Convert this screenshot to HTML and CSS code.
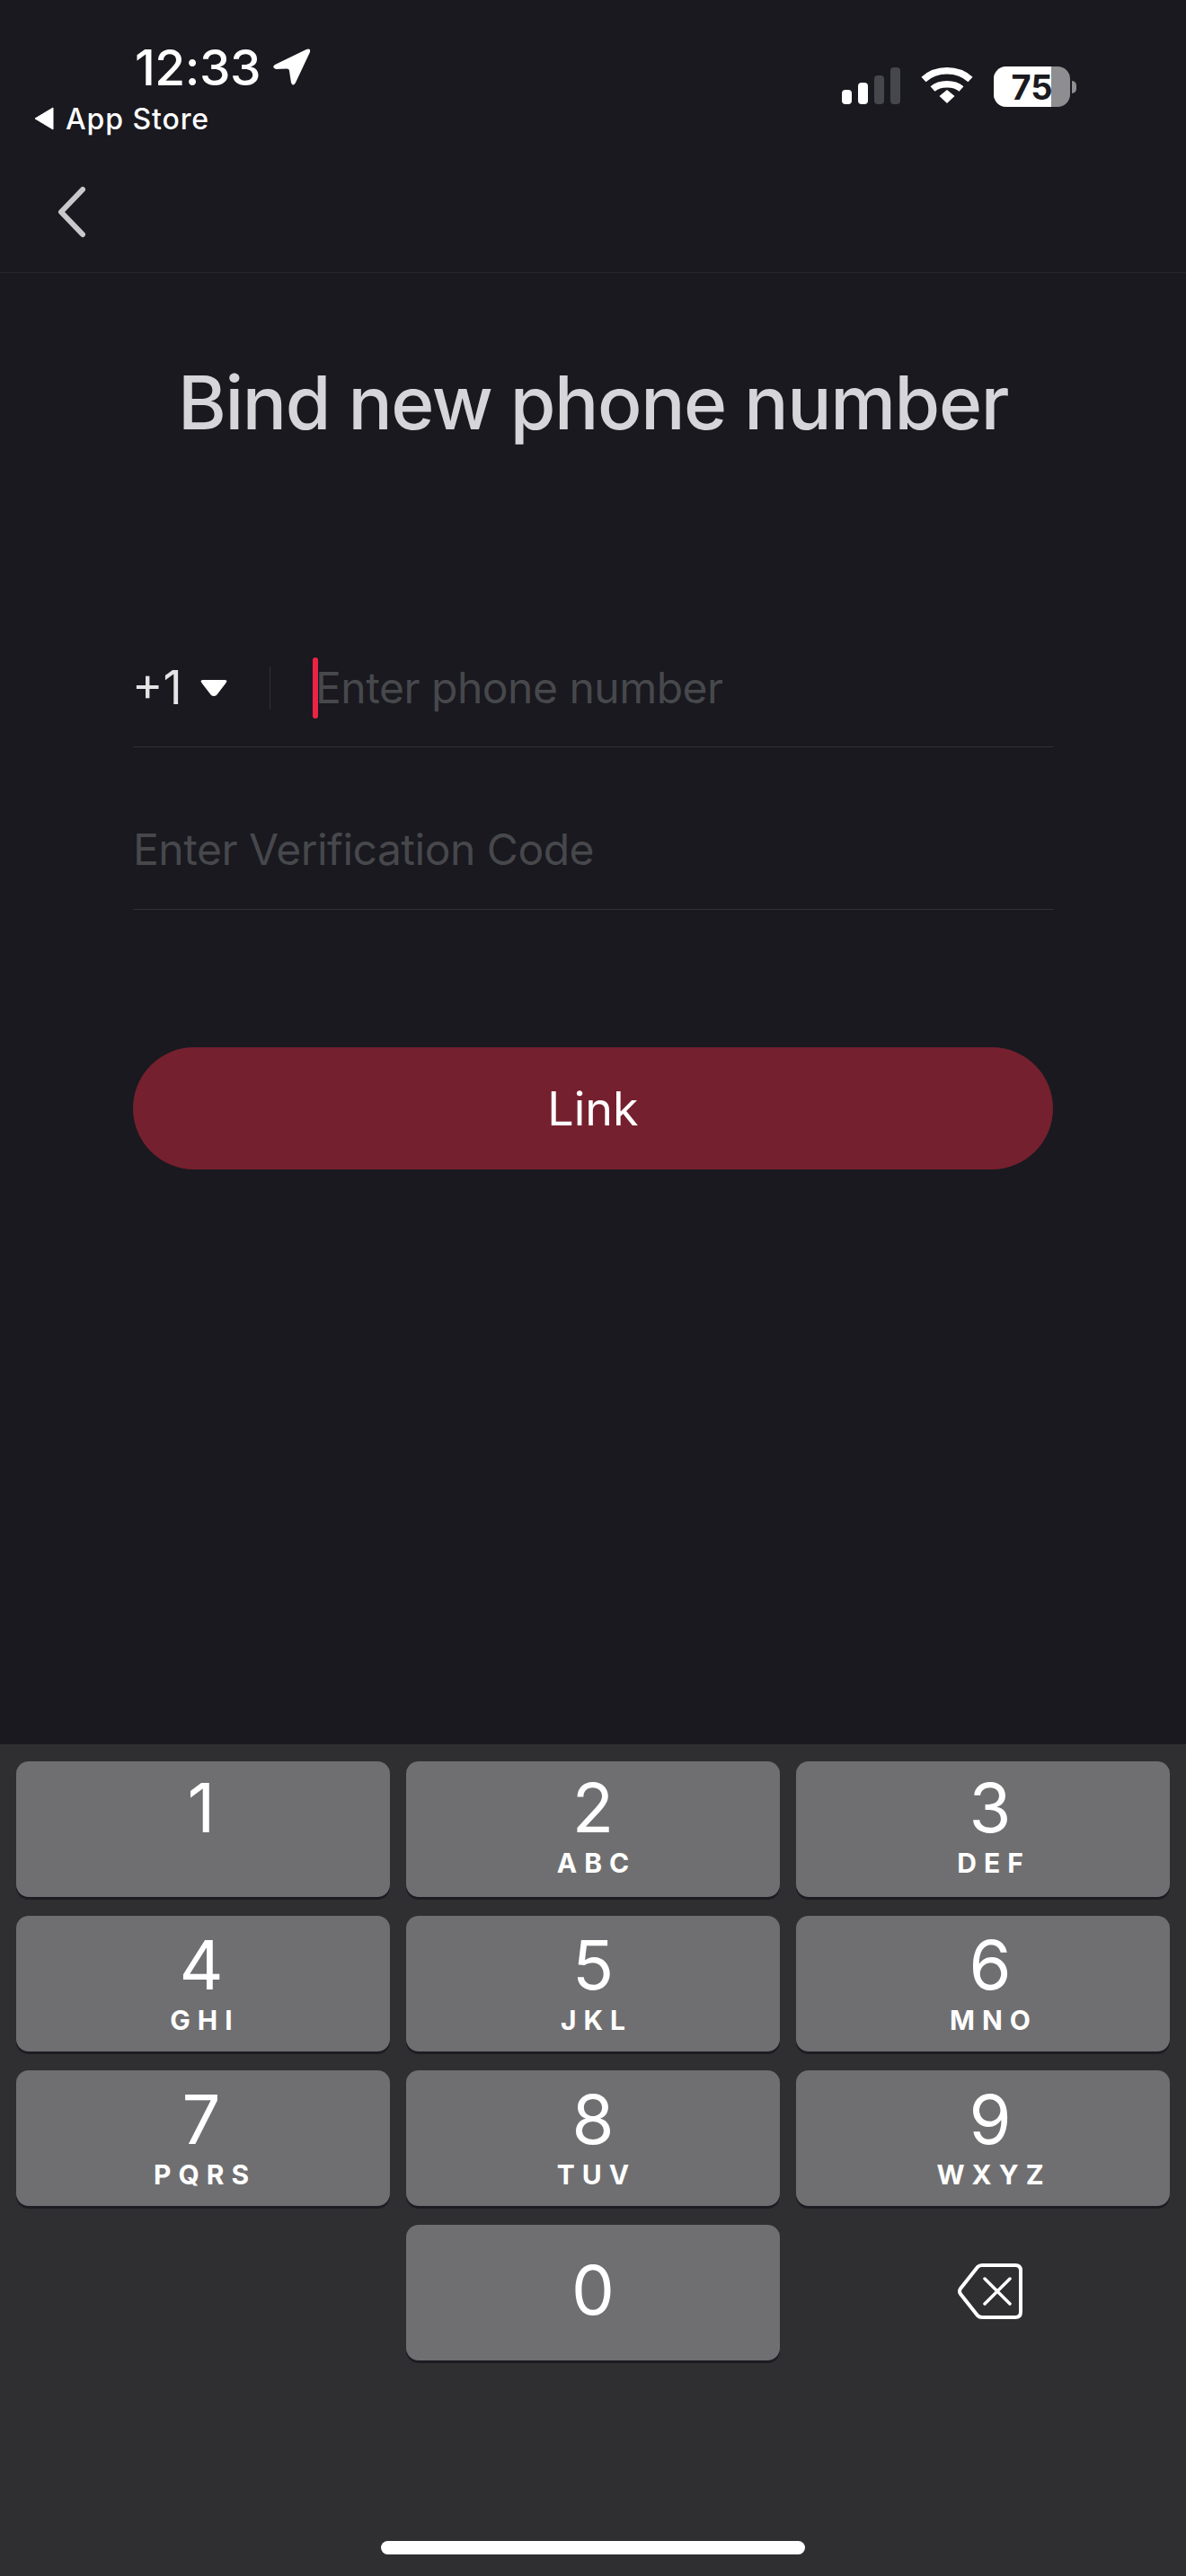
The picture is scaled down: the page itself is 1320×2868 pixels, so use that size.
FILE: index.html
```html
<!DOCTYPE html>
<html lang="en">
<head>
<meta charset="UTF-8" />
<meta name="viewport" content="width=device-width, initial-scale=1" />
<title>Bind new phone number</title>
<link rel="stylesheet" href="styles.css">
</head>
<body>

<div class="page">
  <header class="top">
    <div class="status">
      <div class="status-left">
        <div class="clock">
          <span>12:33</span>
          <svg class="loc" width="42" height="42" viewBox="0 0 42 42"><path d="M2 18 L37 1 Q42 -1 41 4 L25 38 Q22 43 20 38 L18 25 Q18 22.500 15 22.500 L3 23 Q-2 21 2 18Z" fill="#fff"/></svg>
        </div>
        <div class="back-app">
          <svg width="22" height="26" viewBox="0 0 22 26"><path d="M1 13 L21 1 V25Z" fill="#fff" stroke="#fff" stroke-linejoin="round"/></svg>
          <span>App Store</span>
        </div>
      </div>
      <div class="status-right">
        <div class="signal">
          <i class="bar b1"></i>
          <i class="bar b2"></i>
          <i class="bar b3"></i>
          <i class="bar b4"></i>
        </div>
        <svg class="wifi" width="58" height="43" viewBox="0 0 58 43" fill="none" stroke="#fff" stroke-width="7.500">
          <path d="M3 14.500 C17 1.500 41 1.500 55 14.500"/>
          <path d="M13 25 C21 18 37 18 45 25"/>
          <path d="M20.500 33 L29 26 L37.500 33 L29 41Z" fill="#fff" stroke="none"/>
        </svg>
        <div class="battery">
          <div class="battery-body">
            <span class="battery-level"></span>
            <span class="battery-num">75</span>
          </div>
          <i class="battery-nub"></i>
        </div>
      </div>
    </div>
    <div class="nav">
      <svg width="32" height="58" viewBox="0 0 32 58" fill="none" stroke="#c9c9cc" stroke-width="6" stroke-linecap="round" stroke-linejoin="round"><path d="M28 4 L4 29 L28 54"/></svg>
    </div>
  </header>

  <main class="content">
    <h1>Bind new phone number</h1>

    <div class="field phone-field">
      <span class="code">+1</span>
      <svg class="arrow" width="30" height="20" viewBox="0 0 30 20"><path d="M3 1 H27 Q31 1 28 5 L18 18 Q15 20 12 18 L2 5 Q-1 1 3 1Z" fill="#fff"/></svg>
      <i class="divider"></i>
      <i class="caret"></i>
      <span class="placeholder phone-hint">Enter phone number</span>
    </div>

    <div class="field code-field">
      <span class="placeholder">Enter Verification Code</span>
    </div>

    <button class="link-btn">Link</button>
  </main>

  <section class="keyboard">
    <div class="keys">
      <div class="key"><b>1</b></div>
      <div class="key"><b>2</b><small>ABC</small></div>
      <div class="key"><b>3</b><small>DEF</small></div>
      <div class="key"><b>4</b><small>GHI</small></div>
      <div class="key"><b>5</b><small>JKL</small></div>
      <div class="key"><b>6</b><small>MNO</small></div>
      <div class="key"><b>7</b><small>PQRS</small></div>
      <div class="key"><b>8</b><small>TUV</small></div>
      <div class="key"><b>9</b><small>WXYZ</small></div>
      <div class="key empty"></div>
      <div class="key zero"><b>0</b></div>
      <div class="key empty del">
        <svg width="72" height="62" viewBox="0 0 72 62" fill="none" stroke="#fff" stroke-linejoin="round" stroke-linecap="round">
          <path stroke-width="4" d="M27 2 H64 Q70 2 70 8 V54 Q70 60 64 60 H27 Q24 60 22 58 L3 34 Q1 31 3 28 L22 4 Q24 2 27 2Z"/>
          <path stroke-width="3.500" d="M30 17 L58 45 M58 17 L30 45"/>
        </svg>
      </div>
    </div>
    <div class="home-bar"></div>
  </section>
</div>

</body>
</html>
```

FILE: styles.css
```css
* {
  box-sizing: border-box;
}
body {
  margin: 0;
  background: #19191f;
  font-family: Inter, "Liberation Sans", sans-serif;
  color: #fff;
}
.page {
  display: flex;
  flex-direction: column;
  width: 1320px;
  height: 2868px;
  overflow: hidden;
}

/* status bar + nav */
.top {
  height: 304px;
  border-bottom: 1px solid #26262b;
}
.status {
  display: flex;
  justify-content: space-between;
  height: 160px;
  padding: 46px 122px 0 38px;
}
.clock {
  display: flex;
  align-items: center;
  gap: 14px;
  margin-left: 112px;
  height: 58px;
  font-size: 55px;
  font-weight: 500;
  letter-spacing: -0.5px;
}
.back-app {
  display: flex;
  align-items: center;
  gap: 13px;
  margin-top: 8px;
  height: 40px;
  font-size: 32px;
  font-weight: 500;
  letter-spacing: 0.9px;
}
.status-right {
  display: flex;
  align-items: flex-start;
  gap: 23px;
  padding-top: 28px;
}
.signal {
  display: flex;
  align-items: flex-end;
  gap: 7px;
  height: 42px;
}
.bar {
  width: 11px;
  border-radius: 4px;
  background: #fff;
}
.b1 { height: 16px; }
.b2 { height: 24px; }
.b3 { height: 32px; background: #45474c; }
.b4 { height: 41px; background: #45474c; }
.battery {
  display: flex;
  align-items: center;
  gap: 2px;
}
.battery-body {
  position: relative;
  display: flex;
  justify-content: center;
  align-items: center;
  width: 85px;
  height: 45px;
  border-radius: 14px;
  background: #8e8e90;
  overflow: hidden;
}
.battery-level {
  position: absolute;
  left: 0;
  top: 0;
  bottom: 0;
  width: 64px;
  background: #fff;
}
.battery-num {
  position: relative;
  font-size: 38px;
  font-weight: 700;
  color: #1a1a20;
}
.battery-nub {
  width: 5px;
  height: 14px;
  border-radius: 0 7px 7px 0;
  background: #8e8e90;
}
.nav {
  display: flex;
  align-items: center;
  height: 143px;
  padding: 8px 0 0 64px;
}

/* form */
.content {
  flex: 1;
  padding: 0 148px;
}
h1 {
  margin: 107px 0 209px;
  font-size: 82px;
  line-height: 76px;
  font-weight: 500;
  letter-spacing: -1.4px;
  text-align: center;
  color: #d5d5da;
  white-space: nowrap;
}
.field {
  display: flex;
  align-items: center;
  border-bottom: 1px solid #303035;
  font-size: 48px;
  letter-spacing: -0.5px;
}
.phone-field {
  height: 136px;
  padding-top: 4px;
}
.code-field {
  height: 181px;
  padding-top: 47px;
}
.placeholder {
  color: #47484c;
}
.phone-hint {
  margin-left: -3px;
}
.code {
  width: 52px;
  margin-left: -1px;
  font-size: 52px;
  letter-spacing: 0;
  color: #e4e4e6;
}
.arrow {
  margin-left: 24px;
}
.divider {
  width: 1px;
  height: 48px;
  margin: 0 47px;
  background: #303035;
}
.caret {
  width: 6px;
  height: 68px;
  border-radius: 3px;
  background: #ee2244;
}
.link-btn {
  display: block;
  width: 100%;
  height: 136px;
  margin-top: 153px;
  border: 0;
  border-radius: 68px;
  background: #75202f;
  font-family: inherit;
  font-size: 52px;
  color: #fff;
}

/* number pad */
.keyboard {
  height: 926px;
  padding: 19px 18px 0;
  background: #2f2f31;
}
.keys {
  display: grid;
  grid-template-columns: repeat(3, 416px);
  grid-auto-rows: 151px;
  gap: 21px 18px;
}
.key {
  display: flex;
  flex-direction: column;
  align-items: center;
  border-radius: 14px;
  background: #6f6f71;
  box-shadow: 0 3px 0 #1c1c22;
}
.key:nth-child(3n+1) {
  padding-right: 4px;
}
.key:nth-child(3n) {
  padding-left: 16px;
}
.key b {
  height: 90px;
  margin-top: 9px;
  font-size: 76px;
  line-height: 90px;
  font-weight: 400;
}
.key:nth-child(-n+3) b {
  margin-top: 6px;
}
.key small {
  font-size: 30px;
  line-height: 36px;
  font-weight: 700;
  letter-spacing: 8px;
  margin-right: -8px;
  margin-top: -1px;
}
.zero {
  justify-content: center;
}
.zero b {
  margin-top: -8px;
}
.empty {
  background: none;
  box-shadow: none;
}
.del {
  justify-content: center;
}
.del svg {
  margin-top: -3px;
}
.home-bar {
  width: 472px;
  height: 15px;
  margin: 201px auto 0;
  border-radius: 8px;
  background: #fff;
}
```
